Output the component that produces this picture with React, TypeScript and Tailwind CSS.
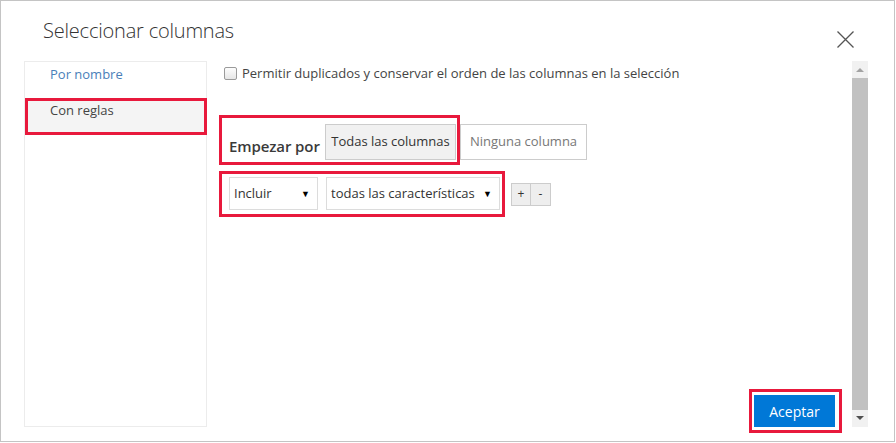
// Select-like box with a small black triangle on the right
function FakeSelect({ label, width }: { label: string; width: string }) {
  return (
    <div className={`${width} h-[33px] border border-[#dcdcdc] bg-white flex items-center pl-[4px] pr-[7px]`}>
      <span className="flex-1 text-[13px] text-[#333]">{label}</span>
      <span className="text-[9px] text-black leading-none">▼</span>
    </div>
  )
}

export default function App() {
  return (
    <div className="w-[895px] h-[442px] border border-[#c4c4c4] bg-white flex flex-col font-['Open_Sans',sans-serif] text-[#333]">
      {/* Header */}
      <div className="h-[60px] flex items-start shrink-0">
        <h1 className="pl-[42px] pt-[15px] text-[20px] font-light text-[#333] tracking-[-0.2px]">
          Seleccionar columnas
        </h1>
        <button className="ml-auto mt-[30px] mr-[40px]">
          <svg width="17" height="17" viewBox="0 0 17 17" className="block">
            <path d="M0.5 0.5 L16.5 16.5 M16.5 0.5 L0.5 16.5" stroke="#555" strokeWidth="1.3" fill="none" />
          </svg>
        </button>
      </div>

      {/* Body */}
      <div className="flex flex-1 min-h-0 pb-[14px]">
        {/* Left nav */}
        <div className="ml-[23px] w-[183px] border border-[#ececec] shrink-0">
          <div className="h-[36px] pt-[3px] pl-[25px] text-[13px] leading-[18px] text-[#4a80b9]">
            Por nombre
          </div>
          <div className="h-[37px] border-[3px] border-[#e8193c] bg-[#f4f4f4] pt-0 pl-[22px] -mr-[1px] text-[13px] leading-[18px] text-[#444]">
            Con reglas
          </div>
        </div>

        {/* Right content + scrollbar */}
        <div className="flex flex-1 mr-[26px]">
          <div className="flex-1 flex flex-col pl-[12px]">
            <label className="mt-[3px] pl-[5px] flex items-center gap-[5px] text-[13px] leading-[18px] text-[#444]">
              <span className="w-[13px] h-[13px] rounded-[2px] border border-[#9a9a9a] bg-gradient-to-b from-[#fdfdfd] to-[#e6e6e6]" />
              Permitir duplicados y conservar el orden de las columnas en la selección
            </label>

            <div className="mt-[33px] flex">
              <div className="w-[241px] h-[50px] border-[3px] border-[#e8193c] flex items-end pl-[7px] pr-[1px] pb-[2px]">
                <span className="flex-1 pb-[3px] text-[15px] font-semibold text-[#3a3a3a] leading-[22px] tracking-[-0.1px]">
                  Empezar por
                </span>
                <button className="w-[131px] h-[36px] border border-[#cccccc] bg-[#f1f1f1] text-[13px] text-[#333]">
                  Todas las columnas
                </button>
              </div>
              <button className="mt-[9px] w-[127px] h-[36px] border border-[#cccccc] bg-white text-[13px] text-[#777]">
                Ninguna columna
              </button>
            </div>

            <div className="mt-[6px] flex items-center">
              <div className="w-[286px] h-[46px] border-[3px] border-[#e8193c] flex items-start gap-[8px] pl-[7px] pt-[3px]">
                <FakeSelect label="Incluir" width="w-[89px]" />
                <FakeSelect label="todas las características" width="w-[174px]" />
              </div>
              <div className="ml-[6px] flex">
                <button className="w-[20px] h-[23px] border border-[#cccccc] bg-[#eeeeee] text-[12px] leading-none text-[#333]">
                  +
                </button>
                <button className="w-[20px] h-[23px] border border-l-0 border-[#cccccc] bg-[#eeeeee] text-[12px] leading-none text-[#333]">
                  -
                </button>
              </div>
            </div>

            <div className="mt-auto self-end mr-[10px] -mb-[6px] w-[93px] h-[44px] border-[3px] border-[#e8193c] pl-[2px] pt-[3px]">
              <button className="w-[81px] h-[32px] bg-[#0078d7] text-white text-[14px]">
                Aceptar
              </button>
            </div>
          </div>

          {/* Scrollbar */}
          <div className="w-[16px] flex flex-col bg-[#f1f1f1]">
            <div className="h-[17px] flex items-center justify-center">
              <svg width="8" height="5" viewBox="0 0 8 5"><path d="M0 5 L4 1 L8 5 Z" fill="#a3a3a3" /></svg>
            </div>
            <div className="flex-1 bg-[#c1c1c1]" />
            <div className="h-[17px] flex items-center justify-center">
              <svg width="8" height="5" viewBox="0 0 8 5"><path d="M0 0 L4 4 L8 0 Z" fill="#505050" /></svg>
            </div>
          </div>
        </div>
      </div>
    </div>
  )
}
